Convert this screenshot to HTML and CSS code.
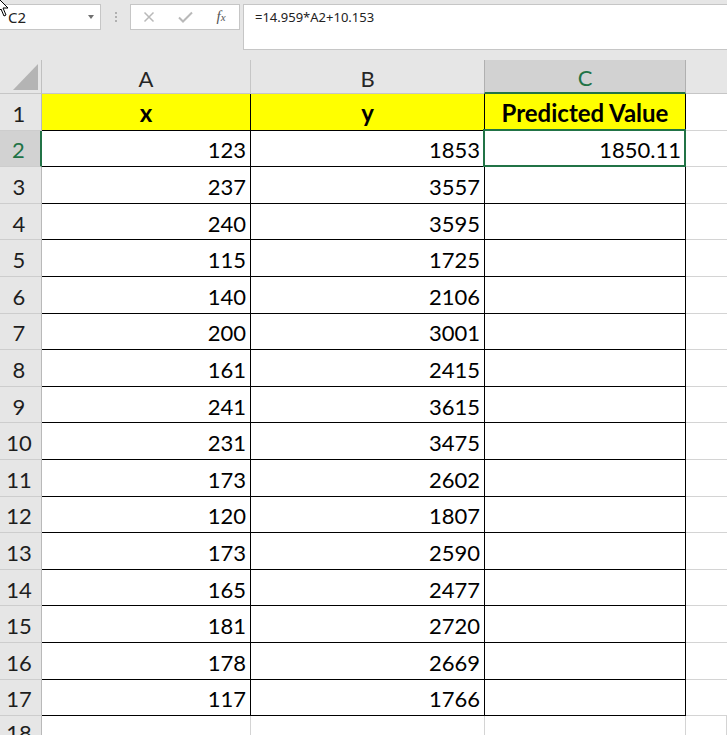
FILE: index.html
```html
<!DOCTYPE html>
<html>
<head>
<meta charset="utf-8">
<link rel="stylesheet" href="styles.css">
</head>
<body>
<div class="toolbar">
  <div class="namebox"><span class="ref">C2</span><span class="caret"></span></div>
  <div class="grip"><i></i><i></i><i></i></div>
  <div class="fbtns">
    <span class="slot"><svg width="12" height="12" viewBox="0 0 12 12"><path d="M1.5 1.5L10.5 10.5M10.5 1.5L1.5 10.5" stroke="#b9b9b9" stroke-width="1.5" fill="none"/></svg></span>
    <span class="slot"><svg width="15" height="12" viewBox="0 0 15 12"><path d="M1 6.5L5 10.5L14 1.5" stroke="#b9b9b9" stroke-width="2" fill="none"/></svg></span>
    <span class="slot fx">f<small>x</small></span>
  </div>
  <div class="formula">=14.959*A2+10.153</div>
</div>
<div class="sheet">
  <div class="corner"><span class="tri"></span></div>
  <div class="ch">A</div><div class="ch">B</div><div class="ch selc">C</div><div class="ch last"></div>

  <div class="rh">1</div><div class="c hd">x</div><div class="c hd">y</div><div class="c hd">Predicted Value</div><div class="e"></div>
  <div class="rh selr">2</div><div class="c">123</div><div class="c">1853</div><div class="c sel">1850.11</div><div class="e"></div>
  <div class="rh">3</div><div class="c">237</div><div class="c">3557</div><div class="c"></div><div class="e"></div>
  <div class="rh">4</div><div class="c">240</div><div class="c">3595</div><div class="c"></div><div class="e"></div>
  <div class="rh">5</div><div class="c">115</div><div class="c">1725</div><div class="c"></div><div class="e"></div>
  <div class="rh">6</div><div class="c">140</div><div class="c">2106</div><div class="c"></div><div class="e"></div>
  <div class="rh">7</div><div class="c">200</div><div class="c">3001</div><div class="c"></div><div class="e"></div>
  <div class="rh">8</div><div class="c">161</div><div class="c">2415</div><div class="c"></div><div class="e"></div>
  <div class="rh">9</div><div class="c">241</div><div class="c">3615</div><div class="c"></div><div class="e"></div>
  <div class="rh">10</div><div class="c">231</div><div class="c">3475</div><div class="c"></div><div class="e"></div>
  <div class="rh">11</div><div class="c">173</div><div class="c">2602</div><div class="c"></div><div class="e"></div>
  <div class="rh">12</div><div class="c">120</div><div class="c">1807</div><div class="c"></div><div class="e"></div>
  <div class="rh">13</div><div class="c">173</div><div class="c">2590</div><div class="c"></div><div class="e"></div>
  <div class="rh">14</div><div class="c">165</div><div class="c">2477</div><div class="c"></div><div class="e"></div>
  <div class="rh">15</div><div class="c">181</div><div class="c">2720</div><div class="c"></div><div class="e"></div>
  <div class="rh">16</div><div class="c">178</div><div class="c">2669</div><div class="c"></div><div class="e"></div>
  <div class="rh">17</div><div class="c">117</div><div class="c">1766</div><div class="c"></div><div class="e"></div>
  <div class="rh">18</div><div class="g"></div><div class="g"></div><div class="g"></div><div class="g"></div>
</div>
<svg class="cursor" width="14" height="22" viewBox="0 0 14 22"><path d="M1 1L1 17L5 13L8 20L10 19L7 12L12 12Z" fill="#fff" stroke="#000" stroke-width="1"/></svg>
</body>
</html>
```

FILE: styles.css
```css
* { box-sizing: border-box; }
html, body { margin: 0; padding: 0; }
body {
  background: #e6e6e6;
  width: 727px;
  height: 735px;
  overflow: hidden;
  position: relative;
  font-family: "Noto Sans", "Liberation Sans", sans-serif;
}

/* formula bar */
.toolbar {
  height: 60px;
  display: flex;
  align-items: flex-start;
  padding-top: 4px;
}
.namebox {
  margin-left: -1px;
  width: 102px;
  height: 26px;
  background: #fff;
  border: 1px solid #c6c6c6;
  display: flex;
  align-items: center;
  padding-left: 8px;
  font-size: 15px;
  color: #222;
}
.namebox .ref { flex: 1; }
.caret {
  width: 0;
  height: 0;
  border-left: 3.5px solid transparent;
  border-right: 3.5px solid transparent;
  border-top: 4px solid #707070;
  margin-right: 6px;
}
.grip {
  width: 29px;
  height: 26px;
  display: flex;
  flex-direction: column;
  align-items: center;
  gap: 2px;
  padding-top: 8px;
}
.grip i { display: block; width: 2px; height: 2px; background: #b0b0b0; }
.fbtns {
  width: 110px;
  height: 26px;
  background: #fff;
  border: 1px solid #c6c6c6;
  display: flex;
}
.slot {
  width: 36px;
  display: flex;
  align-items: center;
  justify-content: center;
}
.fx {
  font-family: "Liberation Serif", serif;
  font-style: italic;
  font-size: 15px;
  color: #555;
  padding-bottom: 2px;
}
.fx small { font-size: 11px; position: relative; top: 1px; }
.formula {
  flex: 1;
  margin-left: 3px;
  margin-right: -4px;
  height: 46px;
  background: #fff;
  border: 1px solid #c6c6c6;
  padding: 3px 0 0 11px;
  font-size: 13px;
  line-height: 18px;
  color: #222;
}

/* grid */
.sheet {
  display: grid;
  grid-template-columns: 42px 209px 234px 201px 1fr;
  grid-template-rows: 34px repeat(17, 36.6px) 1fr;
  height: 675px;
  font-family: Lato, "Open Sans", sans-serif;
  font-size: 22px;
}
.corner {
  background: #e6e6e6;
  border-right: 1px solid #c0c0c0;
  border-bottom: 1px solid #c6c6c6;
  display: flex;
  align-items: flex-end;
  justify-content: flex-end;
  padding: 0 3px 3px 0;
}
.tri {
  width: 0;
  height: 0;
  border-left: 25px solid transparent;
  border-bottom: 26px solid #b4b4b4;
}
.ch {
  background: #e6e6e6;
  border-right: 1px solid #c6c6c6;
  border-bottom: 1px solid #c6c6c6;
  display: flex;
  align-items: center;
  justify-content: center;
  padding-top: 3px;
  color: #262626;
}
.ch.last { border-right: none; }
.ch.selc {
  background: #d2d2d2;
  color: #217346;
  border-left: 1px solid #b0b0b0;
  border-right: 1px solid #b0b0b0;
  border-bottom: 2px solid #217346;
  margin-left: -1px;
}
.rh {
  background: #e6e6e6;
  border-right: 1px solid #b9b9b9;
  border-bottom: 1px solid #cdcdcd;
  display: flex;
  align-items: center;
  justify-content: center;
  padding: 3px 3px 0 0;
  color: #1e1e1e;
}
.rh.selr {
  background: #d2d2d2;
  color: #217346;
  border-right: 2px solid #217346;
}
.c {
  background: #fff;
  border-right: 1px solid #000;
  border-bottom: 1px solid #000;
  display: flex;
  align-items: center;
  justify-content: flex-end;
  padding: 3px 4px 0 0;
  color: #000;
}
.c.hd {
  background: #ffff00;
  justify-content: center;
  font-weight: bold;
  font-size: 24px;
  padding: 1px 0 0 0;
}
.c.sel { position: relative; }
.c.sel::after {
  content: "";
  position: absolute;
  left: -2px;
  right: -1px;
  top: -2px;
  bottom: -1px;
  border: 2px solid #217346;
}
.e {
  background: #fff;
  border-bottom: 1px solid #d4d4d4;
}
.g {
  background: #fff;
  border-right: 1px solid #d4d4d4;
}

.cursor {
  position: absolute;
  left: -4px;
  top: -4px;
}
```
